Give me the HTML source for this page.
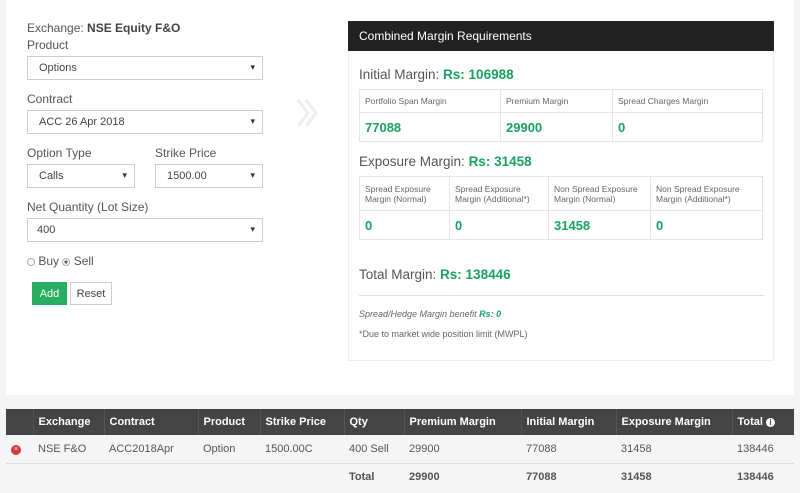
<!DOCTYPE html>
<html><head><meta charset="utf-8"><style>
*{box-sizing:border-box;margin:0;padding:0}
body{width:800px;height:493px;background:#f5f5f5;font-family:"Liberation Sans",sans-serif;color:#555;position:relative;overflow:hidden;font-size:11px}
.a{position:absolute}
.top{left:6px;top:0;width:788px;height:395px;background:#fff}
.lbl{font-size:12px;color:#555}
.sel{border:1px solid #ccc;height:24px;background:#fff;font-size:11px;padding:5px 0 0 11px;color:#444}
.sel:after{content:"▾";position:absolute;right:7px;top:5px;font-size:9px;color:#333}
.g{color:#1aa260;font-weight:bold}
.panel{left:348px;top:21px;width:426px;height:340px;border:1px solid #eee;background:#fff}
.ph{left:348px;top:21px;width:426px;height:30px;background:#222;color:#fff;font-size:12px;padding:8px 0 0 11px}
table.m{position:absolute;border-collapse:collapse;font-size:8.5px;color:#666}
table.m td{border:1px solid #e6e6e6;padding:0 5px;vertical-align:middle}
table.m td.v{font-size:13px;font-weight:bold;color:#1aa260}
.h2{font-size:13.5px;color:#555}
table.b{position:absolute;left:6px;top:409px;width:788px;border-collapse:collapse;font-size:11px}
table.b th{background:#444;color:#fff;text-align:left;height:26px;padding-left:5px;border-left:1px solid #555;font-weight:bold}
table.b td{padding-left:5px;height:28px;color:#555}
</style></head><body>
<div class="a top"></div>
<div class="a lbl" style="left:27px;top:21px">Exchange: <b style="color:#444">NSE Equity F&amp;O</b></div>
<div class="a lbl" style="left:27px;top:38px">Product</div>
<div class="a sel" style="left:27px;top:56px;width:236px">Options</div>
<div class="a lbl" style="left:27px;top:92px">Contract</div>
<div class="a sel" style="left:27px;top:110px;width:236px">ACC 26 Apr 2018</div>
<div class="a lbl" style="left:27px;top:146px">Option Type</div>
<div class="a lbl" style="left:155px;top:146px">Strike Price</div>
<div class="a sel" style="left:27px;top:164px;width:108px">Calls</div>
<div class="a sel" style="left:155px;top:164px;width:108px">1500.00</div>
<div class="a lbl" style="left:27px;top:200px">Net Quantity (Lot Size)</div>
<div class="a sel" style="left:27px;top:218px;width:236px;padding-left:9px">400</div>
<style>.sel:last-of-type{}</style>
<div class="a lbl" style="left:27px;top:254px"><span style="display:inline-block;width:8px;height:8px;border:1px solid #aaa;border-radius:50%;vertical-align:-1px"></span> Buy <span style="display:inline-block;width:8px;height:8px;border:1px solid #aaa;border-radius:50%;vertical-align:-1px;background:radial-gradient(#666 35%,#fff 45%)"></span> Sell</div>
<div class="a" style="left:32px;top:282px;width:35px;height:23px;background:#27ae60;color:#fff;font-size:11px;text-align:center;padding-top:6px">Add</div>
<div class="a" style="left:70px;top:282px;width:42px;height:23px;border:1px solid #ccc;color:#444;font-size:11px;text-align:center;padding-top:5px">Reset</div>
<svg class="a" style="left:296px;top:98px" width="24" height="30"><path d="M2 2 L12 15 L2 28 M10 2 L20 15 L10 28" stroke="#eee" stroke-width="3" fill="none"/></svg>
<div class="a panel"></div>
<div class="a ph">Combined Margin Requirements</div>
<div class="a h2" style="left:359px;top:67px">Initial Margin: <span class="g">Rs: 106988</span></div>
<table class="m" style="left:359px;top:89px;width:404px"><tr style="height:23px"><td style="width:141px">Portfolio Span Margin</td><td style="width:112px">Premium Margin</td><td>Spread Charges Margin</td></tr><tr style="height:29px"><td class="v">77088</td><td class="v">29900</td><td class="v">0</td></tr></table>
<div class="a h2" style="left:359px;top:154px">Exposure Margin: <span class="g">Rs: 31458</span></div>
<table class="m" style="left:359px;top:176px;width:404px"><tr style="height:34px"><td style="width:90px">Spread Exposure Margin (Normal)</td><td style="width:99px">Spread Exposure Margin (Additional*)</td><td style="width:102px">Non Spread Exposure Margin (Normal)</td><td>Non Spread Exposure Margin (Additional*)</td></tr><tr style="height:29px"><td class="v">0</td><td class="v">0</td><td class="v">31458</td><td class="v">0</td></tr></table>
<div class="a h2" style="left:359px;top:267px">Total Margin: <span class="g">Rs: 138446</span></div>
<div class="a" style="left:359px;top:295px;width:405px;height:1px;background:#ddd"></div>
<div class="a" style="left:359px;top:309px;font-size:9px;font-style:italic;color:#666">Spread/Hedge Margin benefit <span class="g">Rs: 0</span></div>
<div class="a" style="left:359px;top:329px;font-size:9px;color:#666">*Due to market wide position limit (MWPL)</div>
<table class="b"><tr><th style="width:27px;border-left:none"></th><th style="width:71px">Exchange</th><th style="width:94px">Contract</th><th style="width:62px">Product</th><th style="width:84px">Strike Price</th><th style="width:60px">Qty</th><th style="width:117px">Premium Margin</th><th style="width:95px">Initial Margin</th><th style="width:116px">Exposure Margin</th><th>Total <span style="display:inline-block;width:9px;height:9px;border-radius:50%;background:#fff;color:#444;font-size:8px;text-align:center;line-height:9px">i</span></th></tr>
<tr style="border-bottom:1px solid #ddd"><td><span style="display:inline-block;width:10px;height:10px;border-radius:50%;background:#d9363e;color:#fff;font-size:7px;text-align:center;line-height:10px">×</span></td><td>NSE F&amp;O</td><td>ACC2018Apr</td><td>Option</td><td>1500.00C</td><td>400 Sell</td><td>29900</td><td>77088</td><td>31458</td><td>138446</td></tr>
<tr style="font-weight:bold"><td></td><td></td><td></td><td></td><td></td><td><b>Total</b></td><td><b>29900</b></td><td><b>77088</b></td><td><b>31458</b></td><td><b>138446</b></td></tr></table>
</body></html>
